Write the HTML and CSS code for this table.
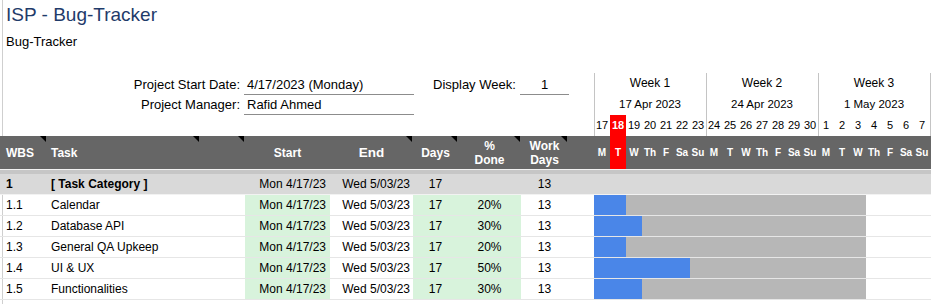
FILE: index.html
```html
<!DOCTYPE html>
<html>
<head>
<meta charset="utf-8">
<link rel="stylesheet" href="styles.css">
</head>
<body>
<div class="sheet">
  <div class="top">
    <div class="top-left">
      <div class="title">ISP - Bug-Tracker</div>
      <div class="subtitle">Bug-Tracker</div>
      <div class="info">
        <div class="lbl">Project Start Date:</div>
        <div class="val">4/17/2023 (Monday)</div>
        <div></div>
        <div class="lbl2">Display Week:</div>
        <div class="val2">1</div>
        <div class="lbl">Project Manager:</div>
        <div class="val">Rafid Ahmed</div>
      </div>
    </div>
    <div class="top-right">
      <div class="weeks">
        <div class="week">
          <div class="wk-label">Week 1</div>
          <div class="wk-date">17 Apr 2023</div>
          <div class="wk-days"><span>17</span><span class="today">18</span><span>19</span><span>20</span><span>21</span><span>22</span><span>23</span></div>
        </div>
        <div class="week">
          <div class="wk-label">Week 2</div>
          <div class="wk-date">24 Apr 2023</div>
          <div class="wk-days"><span>24</span><span>25</span><span>26</span><span>27</span><span>28</span><span>29</span><span>30</span></div>
        </div>
        <div class="week">
          <div class="wk-label">Week 3</div>
          <div class="wk-date">1 May 2023</div>
          <div class="wk-days"><span>1</span><span>2</span><span>3</span><span>4</span><span>5</span><span>6</span><span>7</span></div>
        </div>
        <div class="wk-end"></div>
      </div>
    </div>
  </div>

  <div class="row head">
    <div class="hc left mark">WBS</div>
    <div class="hc task-h mark">Task</div>
    <div class="hc mark"></div>
    <div class="hc center">Start</div>
    <div class="hc center big mark">End</div>
    <div class="hc center mark">Days</div>
    <div class="hc center two mark">%<br>Done</div>
    <div class="hc center two mark">Work<br>Days</div>
    <div class="hc"></div>
    <div class="dl">M</div><div class="dl today">T</div><div class="dl">W</div><div class="dl">Th</div><div class="dl">F</div><div class="dl">Sa</div><div class="dl">Su</div>
    <div class="dl">M</div><div class="dl">T</div><div class="dl">W</div><div class="dl">Th</div><div class="dl">F</div><div class="dl">Sa</div><div class="dl">Su</div>
    <div class="dl">M</div><div class="dl">T</div><div class="dl">W</div><div class="dl">Th</div><div class="dl">F</div><div class="dl">Sa</div><div class="dl">Su</div>
    <div></div>
  </div>
  <div class="stripe"></div>

  <div class="row cat">
    <div class="c wbs b">1</div>
    <div class="c name b">[ Task Category ]</div>
    <div class="c"></div>
    <div class="c start">Mon 4/17/23</div>
    <div class="c end">Wed 5/03/23</div>
    <div class="c center">17</div>
    <div class="c center"></div>
    <div class="c center">13</div>
  </div>

  <div class="row task">
    <div class="c wbs">1.1</div>
    <div class="c name">Calendar</div>
    <div class="c"></div>
    <div class="c start green">Mon 4/17/23</div>
    <div class="c end">Wed 5/03/23</div>
    <div class="c center green">17</div>
    <div class="c center green">20%</div>
    <div class="c center">13</div>
    <div class="c"></div>
    <div class="bar"><div class="done" style="width:32px"></div></div>
  </div>
  <div class="row task">
    <div class="c wbs">1.2</div>
    <div class="c name">Database API</div>
    <div class="c"></div>
    <div class="c start green">Mon 4/17/23</div>
    <div class="c end">Wed 5/03/23</div>
    <div class="c center green">17</div>
    <div class="c center green">30%</div>
    <div class="c center">13</div>
    <div class="c"></div>
    <div class="bar"><div class="done" style="width:48px"></div></div>
  </div>
  <div class="row task">
    <div class="c wbs">1.3</div>
    <div class="c name">General QA Upkeep</div>
    <div class="c"></div>
    <div class="c start green">Mon 4/17/23</div>
    <div class="c end">Wed 5/03/23</div>
    <div class="c center green">17</div>
    <div class="c center green">20%</div>
    <div class="c center">13</div>
    <div class="c"></div>
    <div class="bar"><div class="done" style="width:32px"></div></div>
  </div>
  <div class="row task">
    <div class="c wbs">1.4</div>
    <div class="c name">UI &amp; UX</div>
    <div class="c"></div>
    <div class="c start green">Mon 4/17/23</div>
    <div class="c end">Wed 5/03/23</div>
    <div class="c center green">17</div>
    <div class="c center green">50%</div>
    <div class="c center">13</div>
    <div class="c"></div>
    <div class="bar"><div class="done" style="width:96px"></div></div>
  </div>
  <div class="row task">
    <div class="c wbs">1.5</div>
    <div class="c name">Functionalities</div>
    <div class="c"></div>
    <div class="c start green">Mon 4/17/23</div>
    <div class="c end">Wed 5/03/23</div>
    <div class="c center green">17</div>
    <div class="c center green">30%</div>
    <div class="c center">13</div>
    <div class="c"></div>
    <div class="bar"><div class="done" style="width:48px"></div></div>
  </div>
</div>
</body>
</html>
```

FILE: styles.css
```css
html, body {
  margin: 0;
  padding: 0;
}

body {
  width: 931px;
  height: 304px;
  overflow: hidden;
  font-family: "Liberation Sans", Arial, sans-serif;
  color: #000;
  background: #fff linear-gradient(to right, transparent 2px, #cfcfcf 2px, #cfcfcf 3px, transparent 3px) no-repeat;
}

.sheet {
  width: 931px;
}

/* ---------- top area ---------- */
.top {
  display: grid;
  grid-template-columns: 594px 337px;
  height: 136px;
}

.title {
  padding: 3px 0 0 6px;
  height: 24px;
  line-height: 24px;
  font-size: 19px;
  color: #1f3b6a;
}

.subtitle {
  margin-top: 7px;
  padding-left: 6px;
  height: 16px;
  line-height: 16px;
  font-size: 13px;
}

.info {
  margin-top: 25px;
  display: grid;
  grid-template-columns: 244px 170px 19px 87px 49px;
  grid-auto-rows: 19px;
  row-gap: 1px;
  font-size: 13px;
  line-height: 19px;
}

.lbl {
  text-align: right;
  padding-right: 4px;
}

.val {
  padding-left: 3px;
  border-bottom: 1px solid #8c8c8c;
  height: 19px;
}

.lbl2 {
  padding-left: 0;
}

.val2 {
  text-align: center;
  border-bottom: 1px solid #8c8c8c;
  height: 19px;
}

.top-right {
  padding-top: 73px;
}

.weeks {
  display: grid;
  grid-template-columns: repeat(3, 112px) 1px;
  height: 63px;
}

.week {
  display: grid;
  grid-template-rows: 21px 21px 21px;
  box-shadow: inset 1px 0 #c4c4c4;
}

.wk-end {
  background: #c4c4c4;
}

.wk-label {
  text-align: center;
  font-size: 12px;
  line-height: 21px;
}

.wk-date {
  text-align: center;
  font-size: 11.5px;
  line-height: 21px;
}

.wk-days {
  display: grid;
  grid-template-columns: repeat(7, 16px);
  font-size: 11px;
  line-height: 21px;
  text-align: center;
}

.wk-days .today {
  background: #ff0000;
  color: #fff;
  font-weight: bold;
}

/* ---------- grid rows ---------- */
.row {
  display: grid;
  grid-template-columns: 47px 153px 45px 85px 83px 45px 63px 47px 26px repeat(21, 16px) 1px;
}

.head {
  height: 33px;
  background: #666666;
  color: #fff;
  font-weight: bold;
  font-size: 12px;
  border-bottom: 1px solid #f2f2f2;
}

.hc {
  position: relative;
  display: flex;
  align-items: center;
}

.hc.left {
  padding-left: 6px;
}

.hc.task-h {
  padding-left: 4px;
}

.hc.center {
  justify-content: center;
  text-align: center;
}

.hc.big {
  font-size: 13.5px;
}

.hc.two {
  line-height: 14px;
}

.mark::after {
  content: "";
  position: absolute;
  top: 0;
  right: 1px;
  width: 0;
  height: 0;
  border-top: 6px solid #000;
  border-left: 6px solid transparent;
}

.dl {
  display: flex;
  align-items: center;
  justify-content: center;
  font-size: 10px;
  font-weight: bold;
}

.dl.today {
  background: #ff0000;
}

.stripe {
  height: 4px;
  background: #c6c6c6;
}

.cat {
  height: 20px;
  background: #d9d9d9;
  border-bottom: 1px solid #f2f2f2;
}

.task {
  height: 20px;
  border-bottom: 1px solid #e6e6e6;
}

.c {
  font-size: 12px;
  line-height: 20px;
  white-space: nowrap;
}

.c.b {
  font-weight: bold;
}

.c.wbs {
  padding-left: 6px;
}

.c.name {
  padding-left: 4px;
}

.c.start {
  text-align: right;
  padding-right: 4px;
}

.c.end {
  text-align: right;
  padding-right: 3px;
}

.c.center {
  text-align: center;
}

.green {
  background: #d8f3dc;
}

.bar {
  grid-column: 10 / span 17;
  display: flex;
  background: #b7b7b7;
}

.done {
  background: #4a86e8;
}
```
